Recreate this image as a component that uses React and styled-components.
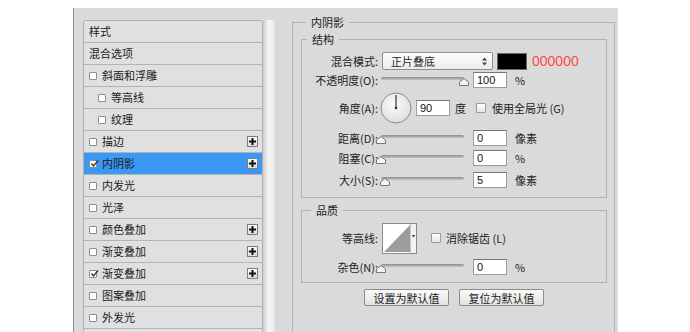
import React from 'react';
import styled, { createGlobalStyle } from 'styled-components';

// 전역 스타일
const GlobalStyle = createGlobalStyle`
  html, body {
    margin: 0;
    background: #fff;
    overflow: hidden;
  }
  body {
    font-family: "Noto Sans CJK SC", "Liberation Sans", sans-serif;
    font-size: 11px;
    color: #1e1e1e;
  }
`;

const Page = styled.div`
  padding: 8px 0 0 73px;
`;

const Dialog = styled.div`
  display: flex;
  align-items: flex-start;
  width: 545px;
  height: 340px;
  box-sizing: border-box;
  padding: 8px 0 0 9px;
  background: #dadada;
  border-left: 1px solid #8a8a8a;
`;

/* ---------- left: style list ---------- */

const LeftColumn = styled.div`
  display: flex;
  align-self: stretch;
  margin-top: 4px;
`;

const StyleList = styled.div`
  width: 180px;
  box-sizing: border-box;
  border: 1px solid #b0b0b0;
  border-radius: 2px 2px 0 0;
  background: #e0e0e0;
  display: flex;
  flex-direction: column;
`;

const StyleRow = styled.div`
  height: 21px;
  flex-shrink: 0;
  display: flex;
  align-items: center;
  padding: 0 4px 0 ${p => (p.$indent ? 14 : 5)}px;
  border-bottom: 1px solid #b4b4b4;
  background: ${p => (p.$active ? '#3b98f4' : '#e0e0e0')};
  font-size: 11px;
  color: #1a1a1a;
  white-space: nowrap;
`;

const RowText = styled.span`
  margin-left: ${p => (p.$bare ? 0 : 5)}px;
  line-height: 21px;
`;

const ListCheck = styled.span`
  width: 8px;
  height: 8px;
  flex-shrink: 0;
  box-sizing: border-box;
  border: 1px solid #8e8e8e;
  border-radius: 1px;
  background: #fff;
  position: relative;
`;

const Tick = styled.svg`
  position: absolute;
  left: 0;
  top: -2px;
`;

const PlusBox = styled.span`
  margin-left: auto;
  width: 11px;
  height: 11px;
  box-sizing: border-box;
  border: 1px solid #7d7d7d;
  background: linear-gradient(#fbfbfb, #dcdcdc);
  display: flex;
  align-items: center;
  justify-content: center;
`;

const ScrollStrip = styled.div`
  width: 14px;
  align-self: stretch;
  background: linear-gradient(to right, #cdcdcd, #f6f6f6 40%, #ececec 75%, #d2d2d2);
`;

/* ---------- right: settings ---------- */

const RightColumn = styled.div`
  margin-left: 15px;
`;

const Group = styled.fieldset`
  margin: ${p => p.$mt || 0}px 0 0 0;
  width: ${p => p.$w}px;
  height: ${p => (p.$h ? `${p.$h}px` : 'auto')};
  box-sizing: border-box;
  padding: ${p => p.$pad};
  border: 1px solid #b2b2b2;
  min-width: 0;
`;

const Legend = styled.legend`
  margin-left: ${p => p.$offset}px;
  padding: 0 5px;
  font-size: 11px;
  line-height: 12px;
  color: #1a1a1a;
`;

const Row = styled.div`
  display: flex;
  align-items: center;
  height: ${p => p.$h}px;
  margin-top: ${p => p.$mt || 0}px;
  white-space: nowrap;
`;

const Label = styled.span`
  width: 76px;
  flex-shrink: 0;
  text-align: right;
  color: #222;
`;

const SelectBox = styled.div`
  width: 111px;
  height: 18px;
  margin-left: 4px;
  box-sizing: border-box;
  padding: 0 5px 0 8px;
  display: flex;
  align-items: center;
  justify-content: space-between;
  border: 1px solid #8e8e8e;
  border-radius: 2px;
  background: linear-gradient(#fdfdfd, #ececec);
`;

const Swatch = styled.div`
  width: 30px;
  height: 17px;
  margin-left: 4px;
  box-sizing: border-box;
  background: #000;
  border: 1px solid #6a6a6a;
`;

const HexText = styled.span`
  margin-left: 5px;
  font-family: "Liberation Sans", Arial, sans-serif;
  font-size: 14px;
  color: #ff4646;
`;

const SliderWrap = styled.div`
  position: relative;
  width: 83px;
  height: 16px;
  margin-left: 3px;
`;

const Track = styled.div`
  margin-top: 5px;
  height: 3px;
  border-radius: 2px;
  background: linear-gradient(#8c8c8c, #c6c6c6);
`;

const Thumb = styled.svg`
  position: absolute;
  top: 6px;
`;

const Field = styled.div`
  width: 34px;
  height: 16px;
  margin-left: ${p => p.$ml}px;
  box-sizing: border-box;
  padding-left: 3px;
  border: 1px solid #9c9c9c;
  border-top-color: #767676;
  background: #fff;
  font-family: "Liberation Sans", Arial, sans-serif;
  font-size: 11px;
  line-height: 14px;
  color: #111;
`;

const Unit = styled.span`
  margin-left: ${p => p.$ml || 8}px;
  color: #222;
`;

const Check = styled.span`
  width: 10px;
  height: 10px;
  flex-shrink: 0;
  margin-left: ${p => p.$ml}px;
  box-sizing: border-box;
  border: 1px solid #9a9a9a;
  border-radius: 1px;
  background: linear-gradient(#fff, #e6e6e6);
`;

const Dial = styled.svg`
  margin-left: 2px;
  flex-shrink: 0;
`;

const Contour = styled.svg`
  margin-left: 4px;
  flex-shrink: 0;
`;

const ButtonRow = styled.div`
  display: flex;
  justify-content: center;
  gap: 10px;
  margin-top: 6px;
`;

const Button = styled.div`
  width: 85px;
  height: 17px;
  box-sizing: border-box;
  display: flex;
  align-items: center;
  justify-content: center;
  border: 1px solid #8b8b8b;
  border-radius: 2px;
  background: linear-gradient(#fbfbfb, #e2e2e2);
  font-size: 11px;
  color: #1a1a1a;
`;

const styleItems = [
  { name: '样式', bare: true },
  { name: '混合选项', bare: true },
  { name: '斜面和浮雕' },
  { name: '等高线', indent: true },
  { name: '纹理', indent: true },
  { name: '描边', plus: true },
  { name: '内阴影', plus: true, checked: true, active: true },
  { name: '内发光' },
  { name: '光泽' },
  { name: '颜色叠加', plus: true },
  { name: '渐变叠加', plus: true },
  { name: '渐变叠加', plus: true, checked: true },
  { name: '图案叠加' },
  { name: '外发光' },
];

const Slider = ({ value }) => (
  <SliderWrap>
    <Track />
    <Thumb width="10" height="8" style={{ left: `calc(${value}% - 5px)` }}>
      <polygon points="0.5,7.5 0.5,4 5,0.5 9.5,4 9.5,7.5" fill="#f4f4f4" stroke="#777" />
    </Thumb>
  </SliderWrap>
);

const StyleItem = ({ item }) => (
  <StyleRow $indent={item.indent} $active={item.active}>
    {!item.bare && (
      <ListCheck>
        {item.checked && (
          <Tick width="9" height="9" viewBox="0 0 9 9">
            <path d="M1.5 4.5 L3.5 7 L8 1.5" fill="none" stroke="#333" strokeWidth="1.3" />
          </Tick>
        )}
      </ListCheck>
    )}
    <RowText $bare={item.bare}>{item.name}</RowText>
    {item.plus && (
      <PlusBox>
        <svg width="7" height="7" viewBox="0 0 7 7">
          <rect x="2.5" y="0" width="2" height="7" fill="#111" />
          <rect x="0" y="2.5" width="7" height="2" fill="#111" />
        </svg>
      </PlusBox>
    )}
  </StyleRow>
);

const App = () => {
  return (
    <>
      <GlobalStyle />
      <Page>
        <Dialog>
          <LeftColumn>
            <StyleList>
              {styleItems.map((item, i) => (
                <StyleItem key={i} item={item} />
              ))}
            </StyleList>
            <ScrollStrip />
          </LeftColumn>

          <RightColumn>
            <Group $w={323} $h={330} $pad="5px 7px 0 8px">
              <Legend $offset={5}>内阴影</Legend>

              <Group $w={306} $pad="6px 0 4px 0">
                <Legend $offset={5}>结构</Legend>
                <Row $h={20}>
                  <Label>混合模式:</Label>
                  <SelectBox>
                    <span>正片叠底</span>
                    <svg width="5" height="9" viewBox="0 0 5 9">
                      <polygon points="0,3.5 2.5,0.5 5,3.5" fill="#444" />
                      <polygon points="0,5.5 2.5,8.5 5,5.5" fill="#444" />
                    </svg>
                  </SelectBox>
                  <Swatch />
                  <HexText>000000</HexText>
                </Row>
                <Row $h={18}>
                  <Label>不透明度(O):</Label>
                  <Slider value={100} />
                  <Field $ml={9}>100</Field>
                  <Unit>%</Unit>
                </Row>
                <Row $h={38}>
                  <Label>角度(A):</Label>
                  <Dial width="32" height="32" viewBox="0 0 32 32">
                    <defs>
                      <radialGradient id="dialFill" cx="45%" cy="40%" r="60%">
                        <stop offset="0%" stopColor="#fdfdfd" />
                        <stop offset="100%" stopColor="#dedede" />
                      </radialGradient>
                    </defs>
                    <circle cx="16" cy="16" r="15" fill="url(#dialFill)" stroke="#8a8a8a" />
                    <line x1="16" y1="3" x2="16" y2="16" stroke="#333" strokeWidth="1.2" />
                    <circle cx="16" cy="16" r="1.3" fill="#333" />
                  </Dial>
                  <Field $ml={4}>90</Field>
                  <Unit $ml={5}>度</Unit>
                  <Check $ml={10} />
                  <Unit $ml={6}>使用全局光 (G)</Unit>
                </Row>
                <Row $h={22}>
                  <Label>距离(D):</Label>
                  <Slider value={0} />
                  <Field $ml={9}>0</Field>
                  <Unit>像素</Unit>
                </Row>
                <Row $h={18}>
                  <Label>阻塞(C):</Label>
                  <Slider value={0} />
                  <Field $ml={9}>0</Field>
                  <Unit>%</Unit>
                </Row>
                <Row $h={26}>
                  <Label>大小(S):</Label>
                  <Slider value={5} />
                  <Field $ml={9}>5</Field>
                  <Unit>像素</Unit>
                </Row>
              </Group>

              <Group $w={306} $mt={6} $pad="7px 0 6px 0">
                <Legend $offset={9}>品质</Legend>
                <Row $h={30}>
                  <Label>等高线:</Label>
                  <Contour width="35" height="31" viewBox="0 0 35 31">
                    <rect x="0.5" y="0.5" width="34" height="30" fill="#fff" stroke="#8a8a8a" />
                    <polygon points="2,29 28,2 28,29" fill="#9c9c9c" />
                    <rect x="29" y="1" width="5" height="29" fill="#f2f2f2" />
                    <line x1="28.5" y1="1" x2="28.5" y2="30" stroke="#c8c8c8" />
                    <polygon points="30,12 33,12 31.5,14.5" fill="#222" />
                  </Contour>
                  <Check $ml={14} />
                  <Unit $ml={5}>消除锯齿 (L)</Unit>
                </Row>
                <Row $h={18} $mt={5}>
                  <Label>杂色(N):</Label>
                  <Slider value={0} />
                  <Field $ml={9}>0</Field>
                  <Unit>%</Unit>
                </Row>
              </Group>

              <ButtonRow>
                <Button>设置为默认值</Button>
                <Button>复位为默认值</Button>
              </ButtonRow>
            </Group>
          </RightColumn>
        </Dialog>
      </Page>
    </>
  );
};

export default App;
